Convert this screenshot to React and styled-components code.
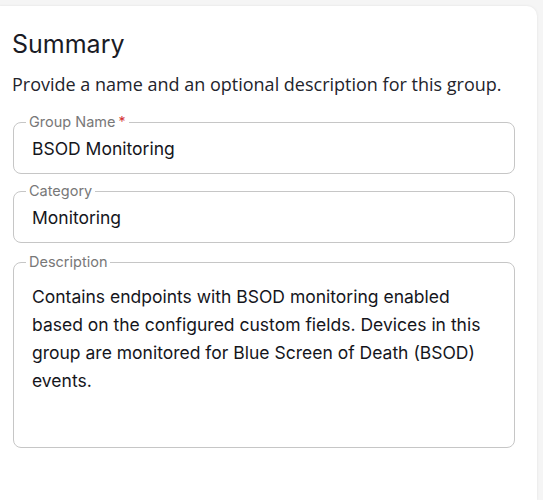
import React from "react";
import styled, { createGlobalStyle } from "styled-components";

const GlobalStyle = createGlobalStyle`
  html, body {
    margin: 0;
    padding: 0;
    background: #f5f5f5;
  }
  body {
    font-family: Inter, "Noto Sans", sans-serif;
    color: #1b1c22;
    overflow: hidden;
  }
`;

const Page = styled.div`
  padding: 6px 6px 0 0;
  height: 500px;
  box-sizing: border-box;
`;

const Card = styled.section`
  margin-left: -10px;
  height: 100%;
  background: #fff;
  border-radius: 10px 10px 0 0;
  box-shadow: 0 0 3px rgba(0, 0, 0, 0.08);
  padding: 22px 22px 0 22px;
  box-sizing: border-box;
`;

const Title = styled.h2`
  margin: 0;
  font-size: 25px;
  line-height: 32px;
  font-weight: 400;
  color: #1a1b25;
`;

const Subtitle = styled.p`
  margin: 12px 0 18px;
  font-family: "Open Sans", sans-serif;
  font-size: 18px;
  line-height: 24px;
  color: #23242c;
`;

const Fields = styled.div`
  display: flex;
  flex-direction: column;
  gap: 9px;
  margin-left: 1px;
  width: 502px;
`;

const Field = styled.fieldset`
  margin: 0;
  padding: 7px 18px ${(p) => p.$bottom || 12}px;
  border: 1px solid #c6c6c6;
  border-radius: 8px;
  min-width: 0;
`;

const Legend = styled.legend`
  margin-left: -6px;
  padding: 0 3px;
  font-size: 14.5px;
  line-height: 16px;
  color: #787878;
`;

const Required = styled.span`
  color: #d32f2f;
  font-size: 14px;
  margin-left: 3px;
`;

const Value = styled.div`
  font-size: 17.5px;
  line-height: ${(p) => p.$lh || 24}px;
  color: #15161c;
`;

function Summary() {
  return (
    <Card>
      <Title>Summary</Title>
      <Subtitle>Provide a name and an optional description for this group.</Subtitle>
      <Fields>
        <Field>
          <Legend>
            Group Name<Required>*</Required>
          </Legend>
          <Value>BSOD Monitoring</Value>
        </Field>
        <Field>
          <Legend>Category</Legend>
          <Value>Monitoring</Value>
        </Field>
        <Field style={{ marginTop: 2 }} $bottom={52}>
          <Legend>Description</Legend>
          <Value $lh={28} style={{ paddingTop: 6 }}>
            Contains endpoints with BSOD monitoring enabled based on the
            configured custom fields. Devices in this group are monitored for
            Blue Screen of Death (BSOD) events.
          </Value>
        </Field>
      </Fields>
    </Card>
  );
}

export default function App() {
  return (
    <>
      <GlobalStyle />
      <Page>
        <Summary />
      </Page>
    </>
  );
}
